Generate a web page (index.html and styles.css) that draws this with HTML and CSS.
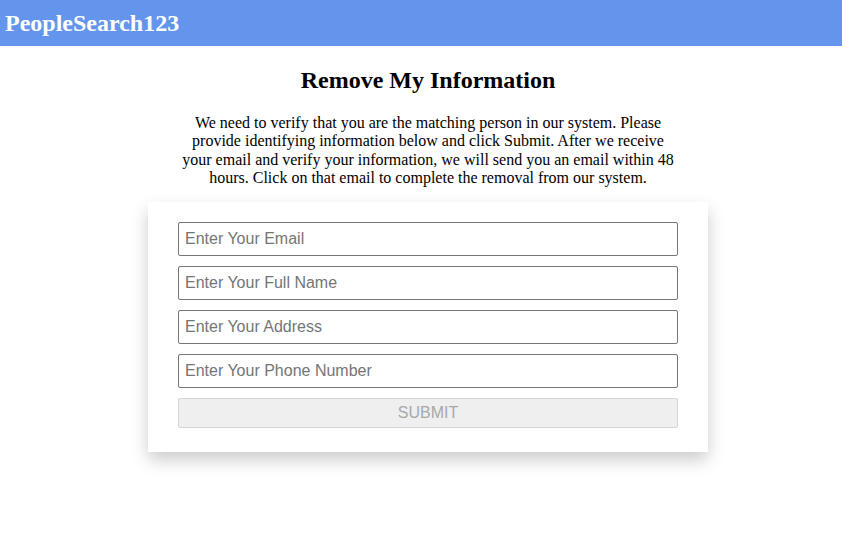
FILE: index.html
```html
<!DOCTYPE html>
<html lang="en">
<head>
<meta charset="utf-8">
<title>PeopleSearch123 - Remove My Information</title>
<link rel="stylesheet" href="styles.css">
</head>
<body>
<header class="topbar">
  <div class="brand">PeopleSearch123</div>
</header>
<main class="content">
  <h2 class="title">Remove My Information</h2>
  <p class="intro">We need to verify that you are the matching person in our system. Please provide identifying information below and click Submit. After we receive your email and verify your information, we will send you an email within 48 hours. Click on that email to complete the removal from our system.</p>
  <form class="card">
    <input class="field" type="email" placeholder="Enter Your Email">
    <input class="field" type="text" placeholder="Enter Your Full Name">
    <input class="field" type="text" placeholder="Enter Your Address">
    <input class="field" type="tel" placeholder="Enter Your Phone Number">
    <button class="submit" type="submit" disabled>SUBMIT</button>
  </form>
</main>
</body>
</html>
```

FILE: styles.css
```css
html, body {
  margin: 0;
  padding: 0;
  background: #ffffff;
  font-family: "Liberation Serif", "Times New Roman", serif;
  color: #000;
}

.topbar {
  background: #6495ed;
  height: 46px;
  display: flex;
  align-items: center;
  padding-left: 5px;
}

.brand {
  color: #ffffff;
  font-weight: bold;
  font-size: 24px;
  line-height: 1;
  margin-top: -1px;
}

.content {
  display: flex;
  flex-direction: column;
  align-items: center;
  padding-left: 14px;
  padding-bottom: 60px;
}

.title {
  font-size: 24px;
  font-weight: bold;
  margin: 20px 0 0 0;
  line-height: 28px;
}

.intro {
  width: 500px;
  text-align: center;
  font-size: 16px;
  line-height: 18.4px;
  margin: 20px 0 0 0;
}

.card {
  width: 500px;
  margin-top: 14px;
  padding: 20px 30px 24px 30px;
  background: #fff;
  box-shadow: 0 8px 16px rgba(0, 0, 0, 0.2);
  display: flex;
  flex-direction: column;
  gap: 10px;
}

.field {
  box-sizing: border-box;
  height: 34px;
  width: 100%;
  margin: 0;
  border: 1px solid #767676;
  border-radius: 2px;
  padding: 0 6px;
  font-family: "Liberation Sans", Arial, sans-serif;
  font-size: 16px;
  color: #000;
  background: #fff;
}

.field::placeholder {
  color: #757575;
  opacity: 1;
}

.submit {
  box-sizing: border-box;
  height: 30px;
  width: 100%;
  margin: 0;
  border: 1px solid #d4d4d4;
  border-radius: 2px;
  background: #efefef;
  color: #a8a8a8;
  font-family: "Liberation Sans", Arial, sans-serif;
  font-size: 16px;
  padding: 0;
}
```
